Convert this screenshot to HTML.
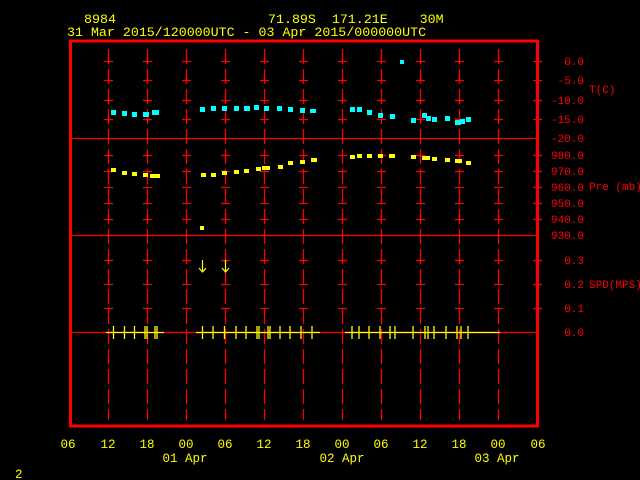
<!DOCTYPE html>
<html><head><style>
html,body{margin:0;padding:0;background:#000;width:640px;height:480px;overflow:hidden}
svg{display:block}
text{font-family:"Liberation Mono",monospace;white-space:pre}
</style></head><body>
<svg width="640" height="480" xmlns="http://www.w3.org/2000/svg">
<g fill="#ffff00" font-size="13.3">
<text x="84" y="23">8984</text>
<text x="268" y="23" xml:space="preserve">71.89S  171.21E    30M</text>
<text x="67" y="36">31 Mar 2015/120000UTC - 03 Apr 2015/000000UTC</text>
</g>
<g stroke="#ff0000" stroke-width="1.3" stroke-dasharray="15 5">
<line x1="108.5" y1="49" x2="108.5" y2="420"/>
<line x1="147.5" y1="49" x2="147.5" y2="420"/>
<line x1="186.5" y1="49" x2="186.5" y2="420"/>
<line x1="225.5" y1="49" x2="225.5" y2="420"/>
<line x1="264.5" y1="49" x2="264.5" y2="420"/>
<line x1="303.5" y1="49" x2="303.5" y2="420"/>
<line x1="342.5" y1="49" x2="342.5" y2="420"/>
<line x1="381.5" y1="49" x2="381.5" y2="420"/>
<line x1="420.5" y1="49" x2="420.5" y2="420"/>
<line x1="459.5" y1="49" x2="459.5" y2="420"/>
<line x1="498.5" y1="49" x2="498.5" y2="420"/>
</g>
<defs>
<path id="tk" d="M104 61.5h9M104 80.5h9M104 100.5h9M104 119.5h9M104 155.5h9M104 171.5h9M104 187.5h9M104 203.5h9M104 219.5h9M104 260.5h9M104 284.5h9M104 308.5h9"/>
</defs>
<g stroke="#ff0000" stroke-width="1.3">
<use href="#tk"/><use href="#tk" x="39"/><use href="#tk" x="78"/><use href="#tk" x="117"/><use href="#tk" x="156"/><use href="#tk" x="195"/><use href="#tk" x="234"/><use href="#tk" x="273"/><use href="#tk" x="312"/><use href="#tk" x="351"/><use href="#tk" x="390"/><use href="#tk" x="429"/>
</g>
<g stroke="#ff0000" stroke-width="1.3">
<line x1="70" y1="138.5" x2="538" y2="138.5"/>
<line x1="70" y1="235.5" x2="538" y2="235.5"/>
<line x1="70" y1="332.5" x2="538" y2="332.5"/>
</g>
<rect x="70.5" y="41" width="467" height="385" fill="none" stroke="#ff0000" stroke-width="3"/>
<g fill="#ff0000" font-size="11" text-anchor="end">
<text x="584" y="65">0.0</text>
<text x="584" y="84">-5.0</text>
<text x="584" y="104">-10.0</text>
<text x="584" y="123">-15.0</text>
<text x="584" y="142">-20.0</text>
<text x="584" y="159">980.0</text>
<text x="584" y="175">970.0</text>
<text x="584" y="191">960.0</text>
<text x="584" y="207">950.0</text>
<text x="584" y="223">940.0</text>
<text x="584" y="239">930.0</text>
<text x="584" y="264">0.3</text>
<text x="584" y="288">0.2</text>
<text x="584" y="312">0.1</text>
<text x="584" y="336">0.0</text>
</g>
<g fill="#ff0000" font-size="11">
<text x="589" y="93">T(C)</text>
<text x="589" y="190">Pre (mb)</text>
<text x="589" y="288">SPD(MPS)</text>
</g>
<g fill="#00ffff">
<rect x="111" y="110" width="5" height="5"/><rect x="122" y="111" width="5" height="5"/><rect x="132" y="112" width="5" height="5"/><rect x="143" y="112" width="6" height="5"/><rect x="152" y="110" width="7" height="5"/>
<rect x="200" y="107" width="5" height="5"/><rect x="211" y="106" width="5" height="5"/><rect x="222" y="106" width="5" height="5"/><rect x="234" y="106" width="5" height="5"/><rect x="244" y="106" width="6" height="5"/><rect x="254" y="105" width="5" height="5"/><rect x="264" y="106" width="5" height="5"/><rect x="277" y="106" width="5" height="5"/><rect x="288" y="107" width="5" height="5"/><rect x="300" y="108" width="5" height="5"/><rect x="310" y="109" width="6" height="4"/>
<rect x="350" y="107" width="5" height="5"/><rect x="357" y="107" width="5" height="5"/><rect x="367" y="110" width="5" height="5"/><rect x="378" y="113" width="5" height="5"/><rect x="390" y="114" width="5" height="5"/><rect x="411" y="118" width="5" height="5"/><rect x="422" y="113" width="5" height="5"/><rect x="426" y="116" width="5" height="5"/><rect x="432" y="117" width="5" height="5"/><rect x="445" y="116" width="5" height="5"/><rect x="455" y="120" width="6" height="5"/><rect x="460" y="119" width="5" height="5"/><rect x="466" y="117" width="5" height="5"/>
<rect x="400" y="60" width="4" height="4"/>
</g>
<g fill="#ffff00">
<rect x="111" y="168" width="5" height="4"/><rect x="122" y="171" width="5" height="4"/><rect x="132" y="172" width="5" height="4"/><rect x="143" y="173" width="5" height="4"/><rect x="150" y="174" width="5" height="4"/><rect x="155" y="174" width="5" height="4"/>
<rect x="201" y="173" width="5" height="4"/><rect x="211" y="173" width="5" height="4"/><rect x="222" y="171" width="5" height="4"/><rect x="234" y="170" width="5" height="4"/><rect x="244" y="169" width="5" height="4"/><rect x="256" y="167" width="5" height="4"/><rect x="262" y="166" width="8" height="4"/><rect x="278" y="165" width="5" height="4"/><rect x="288" y="161" width="5" height="4"/><rect x="300" y="160" width="5" height="4"/><rect x="311" y="158" width="6" height="4"/>
<rect x="350" y="155" width="5" height="4"/><rect x="357" y="154" width="5" height="4"/><rect x="367" y="154" width="5" height="4"/><rect x="378" y="154" width="5" height="4"/><rect x="389" y="154" width="6" height="4"/><rect x="411" y="155" width="5" height="4"/><rect x="422" y="156" width="8" height="4"/><rect x="432" y="157" width="5" height="4"/><rect x="445" y="158" width="5" height="4"/><rect x="455" y="159" width="7" height="4"/><rect x="466" y="161" width="5" height="4"/>
<rect x="200" y="226" width="4" height="4"/>
</g>
<g stroke="#ffff00" stroke-width="1.2" fill="none">
<path d="M202.5 260v12M199 268l3.5 4 3.5-4"/>
<path d="M225.5 260v12M222 268l3.5 4 3.5-4"/>
</g>
<g stroke="#ffff00" stroke-width="1.3">
<path d="M106 332.5h58M196 332.5h124M345 332.5h155"/>
<path d="M113.5 326v13M124.5 326v13M134.5 326v13M145 326v13M147 326v13M155 326v13M157 326v13 M202.5 326v13M213 326v13M224.5 326v13M236 326v13M246 326v13M257 326v13M259 326v13M268 326v13M270 326v13M280 326v13M290 326v13M301 326v13M312 326v13 M352 326v13M359 326v13M369 326v13M380 326v13M390 326v13M395 326v13M413 326v13M425 326v13M428 326v13M434 326v13M446 326v13M457 326v13M461 326v13M468 326v13"/>
</g>
<g fill="#ffff00" font-size="12.5" text-anchor="middle">
<text x="68" y="448">06</text><text x="108" y="448">12</text><text x="147" y="448">18</text><text x="186" y="448">00</text><text x="225" y="448">06</text><text x="264" y="448">12</text><text x="303" y="448">18</text><text x="342" y="448">00</text><text x="381" y="448">06</text><text x="420" y="448">12</text><text x="459" y="448">18</text><text x="498" y="448">00</text><text x="538" y="448">06</text>
<text x="185" y="462">01 Apr</text><text x="342" y="462">02 Apr</text><text x="497" y="462">03 Apr</text>
</g>
<text x="15" y="478" fill="#ffff00" font-size="12.5">2</text>
</svg>
</body></html>
